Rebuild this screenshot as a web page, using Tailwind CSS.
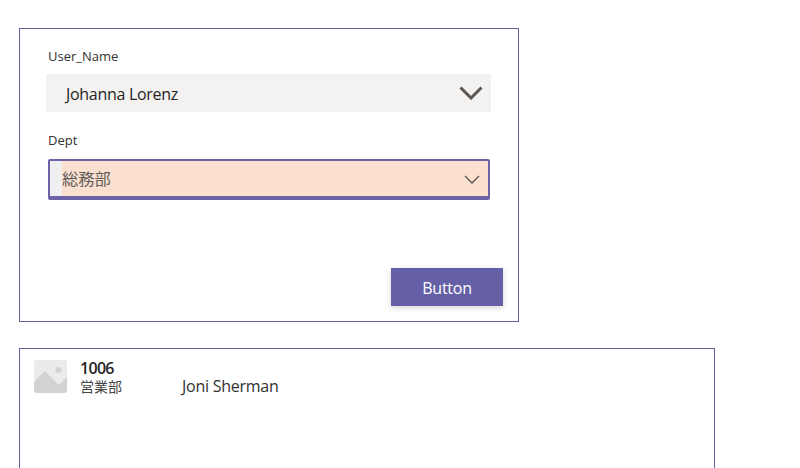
<!DOCTYPE html>
<html>
    <head>
        <meta charset="UTF-8">
        <title>Form</title>
        <script src="https://cdn.jsdelivr.net/npm/@tailwindcss/browser@4"></script>
    </head>
    <body class="bg-white h-[468px] overflow-hidden font-['Open_Sans','Noto_Sans_CJK_JP',sans-serif] text-[#323130]">
        <div class="pt-[28px] pl-[19px]">
            <div class="w-[500px] h-[294px] border border-[#665f98] pt-[17px] pl-[26px] pr-[15px] flex flex-col">
                <label class="block pl-[2px] text-[13px] leading-[20px] h-[28px]">User_Name</label>
                <div class="w-[445px] h-[38px] bg-[#f3f2f1] flex items-center justify-between pl-[20px] pr-[8px] text-[16px] tracking-[-0.3px] text-[#252423]">
                    <span class="mt-[2px]">Johanna Lorenz</span>
                    <svg class="w-[24px] h-[14px]" viewBox="0 0 24 14" fill="none" stroke="#5a5654" stroke-width="3"><path d="M1.5 1.5 L12 12 L22.5 1.5" /></svg>
                </div>
                <label class="block pl-[2px] mt-[18px] text-[13px] leading-[20px] h-[29px]">Dept</label>
                <div class="ml-[2px] w-[442px] h-[40.5px] border-2 border-b-[4px] border-[#6b62a8] rounded-[2px] bg-[#fbdfcf] flex items-center justify-between pr-[8px] text-[16px] text-[#605e5c]">
                    <div class="flex items-center h-full">
                        <span class="w-[12px] h-full bg-[#f0efef]"></span>
                        <span class="mt-[2px] text-[16.3px]">総務部</span>
                    </div>
                    <svg class="w-[16px] h-[9px] mt-[2px]" viewBox="0 0 16 9" fill="none" stroke="#5a5654" stroke-width="1.4"><path d="M1 1 L8 8 L15 1" /></svg>
                </div>
                <div class="flex justify-end mt-[68.5px]">
                    <button class="w-[112px] h-[38px] bg-[#6560a6] text-white text-[16px] tracking-[-0.25px] pt-[2px] shadow-[0_2px_6px_rgba(0,0,0,0.16)]">Button</button>
                </div>
            </div>
            <div class="mt-[26px] w-[696px] h-[200px] border border-[#665f98] pl-[14px] pt-[11px] flex">
                <svg class="w-[33px] h-[33px] shrink-0" viewBox="0 0 33 33">
                    <rect width="33" height="33" rx="3" fill="#ebebeb" />
                    <circle cx="24.5" cy="10" r="3" fill="#d2d2d2" />
                    <path d="M0 22 L11 11 L25 25 L33 17 V30 a3 3 0 0 1 -3 3 H3 a3 3 0 0 1 -3 -3 Z" fill="#d2d2d2" />
                </svg>
                <div class="ml-[13px] w-[102px] -mt-[3px]">
                    <div class="text-[16px] leading-[22px] font-semibold tracking-[-0.7px] text-[#252423]">1006</div>
                    <div class="text-[14px] leading-[16px] text-[#484644]">営業部</div>
                </div>
                <div class="text-[16px] leading-[22px] mt-[15px] tracking-[-0.25px] text-[#323130]">Joni Sherman</div>
            </div>
        </div>
    </body>
</html>
